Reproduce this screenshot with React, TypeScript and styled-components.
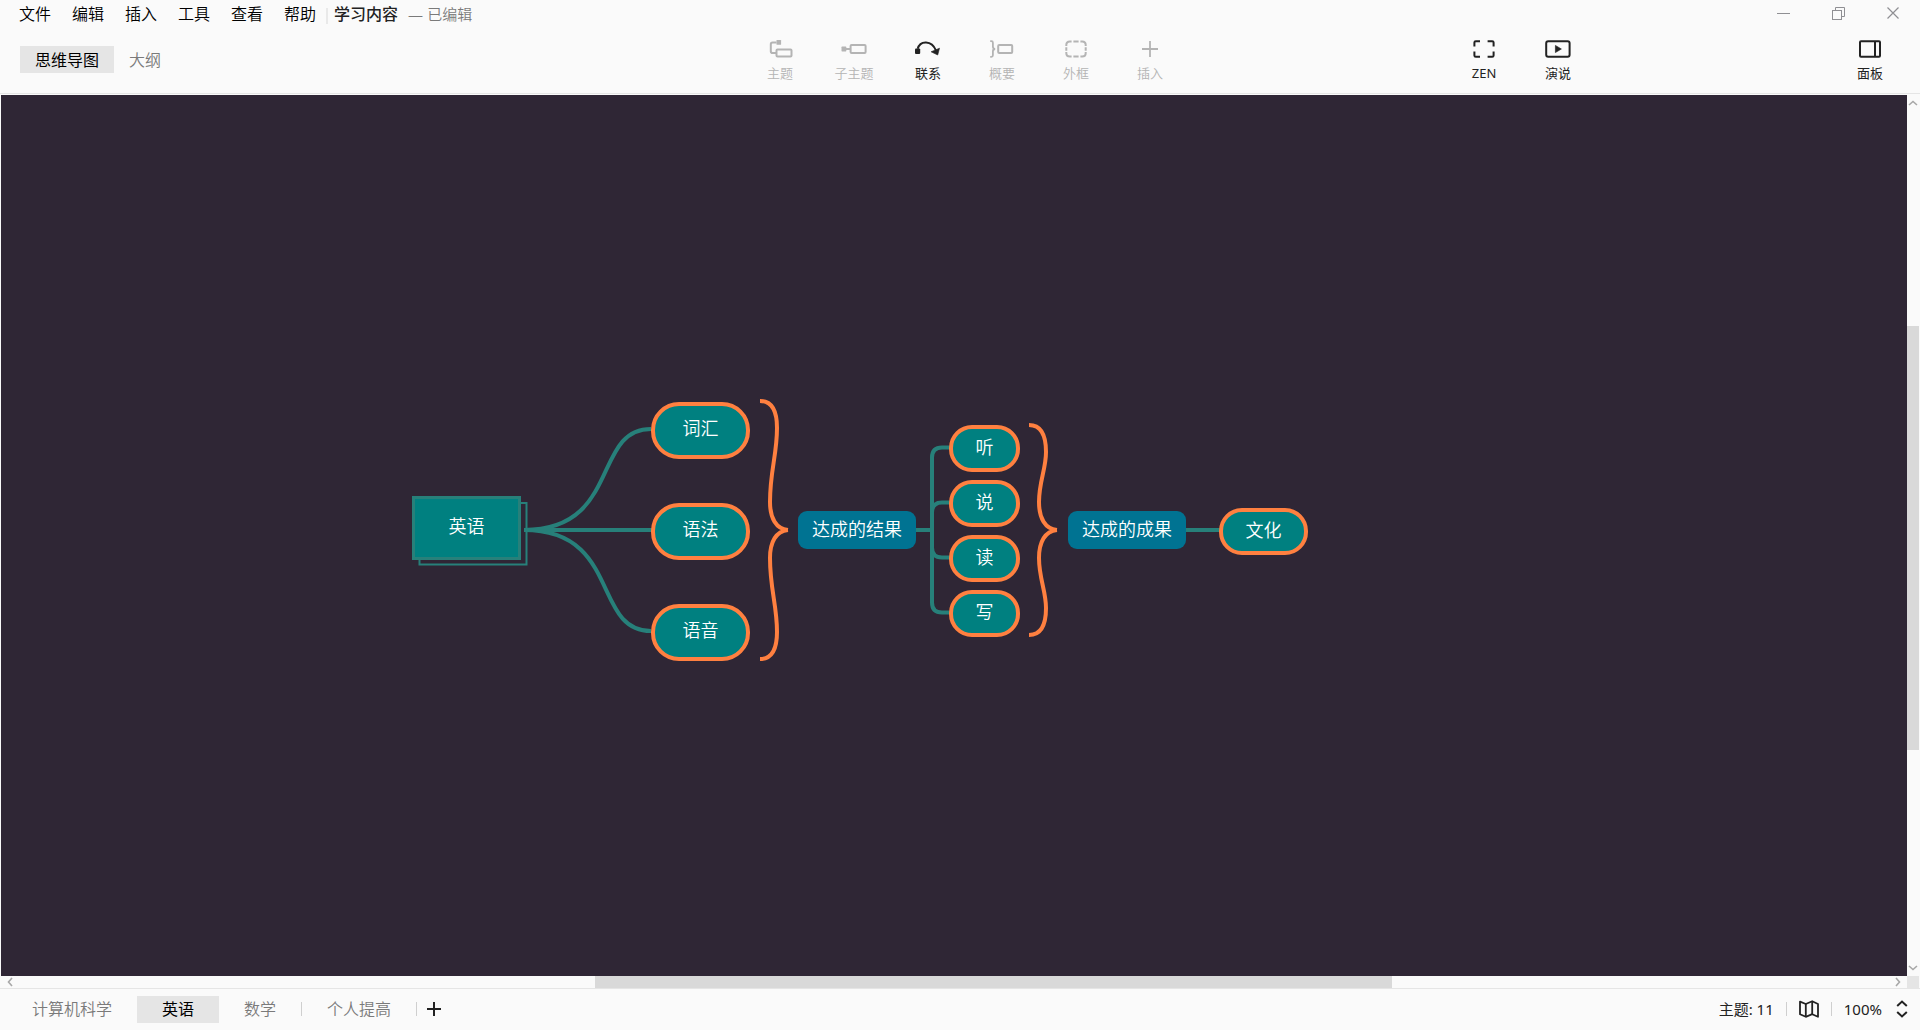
import React from "react";
import styled, { createGlobalStyle, css } from "styled-components";

const color = {
  chrome: "#fafafa",
  line: "#e5e5e5",
  thumb: "#d9d9d9",
  text: "#222",
  muted: "#7a7a7a",
  disabled: "#b4b4b4",
  canvas: "#2f2635",
  teal: "#008080",
  branch: "#27807a",
  orange: "#ff8040",
  blue: "#007392",
};

const GlobalStyle = createGlobalStyle`
  * { box-sizing: border-box; }
  html, body, #root { height: 100%; }
  body {
    margin: 0;
    overflow: hidden;
    background: ${color.chrome};
    color: ${color.text};
    font-family: "Noto Sans", "Noto Sans CJK SC", sans-serif;
  }
  button {
    border: 0;
    padding: 0;
    background: none;
    color: inherit;
    font: inherit;
    white-space: nowrap;
  }
  svg { display: block; }
`;

const Page = styled.div`
  display: flex;
  flex-direction: column;
  height: 100%;
`;

/* ---------- title and menu bar ---------- */

const MenuBar = styled.header`
  display: flex;
  align-items: center;
  height: 28px;
  padding-left: 19px;
`;

const Menus = styled.nav`
  display: flex;
  gap: 21px;
`;

const MenuButton = styled.button`
  color: #000;
  font-size: 16px;
  line-height: 24px;
  font-weight: 350;
`;

const TitleDivider = styled.span`
  width: 2px;
  height: 16px;
  margin: 4px 6px 0 10px;
  background: #e9e9e9;
`;

const DocumentTitle = styled.h1`
  margin: 0;
  font-size: 16px;
  line-height: 24px;
  font-weight: 500;
`;

const EditState = styled.span`
  display: flex;
  align-items: center;
  gap: 4px;
  margin-left: 10px;
  color: ${color.muted};
  font-size: 15px;
  line-height: 24px;
  font-weight: 350;
`;

const WindowControls = styled.div`
  display: flex;
  margin-left: auto;
  color: #8f8f93;
`;

const WindowButton = styled.button`
  display: grid;
  place-items: center;
  width: 55px;
  height: 28px;
`;

/* ---------- tool bar ---------- */

const ToolBar = styled.div`
  display: grid;
  grid-template-columns: 1fr auto 1fr;
  height: 66px;
  padding: 0 10px 0 20px;
  border-bottom: 1px solid ${color.line};
`;

const ViewTabs = styled.div`
  display: flex;
  align-items: flex-start;
  padding-top: 18px;
`;

const tabStyle = css<{ $active?: boolean }>`
  height: 27px;
  font-size: 16px;
  line-height: 26px;
  font-weight: ${(p) => (p.$active ? 400 : 350)};
  color: ${(p) => (p.$active ? "#000" : color.muted)};
  background: ${(p) => (p.$active ? color.line : "transparent")};
`;

const ViewTab = styled.button<{ $active?: boolean }>`
  && {
    ${tabStyle}
    padding: 0 15px;
  }
`;

const ToolGroup = styled.div`
  display: flex;
  gap: 10px;
`;

const RightTools = styled.div`
  display: flex;
  justify-content: space-between;
  padding: 0 8px 0 270px;
`;

const ToolButton = styled.button`
  && {
    display: flex;
    flex-direction: column;
    align-items: center;
    gap: 5px;
    width: 64px;
    padding-top: 11px;
    font-size: 13px;
    line-height: 18px;
  }

  &&:disabled {
    color: ${color.disabled};
    font-weight: 350;
  }
`;

/* ---------- workspace ---------- */

const Workspace = styled.main`
  display: grid;
  grid-template-columns: 1fr 12px;
  grid-template-rows: 1fr 12px;
  flex: 1;
  min-height: 0;
  padding: 1px 1px 0 1px;
  border-bottom: 1px solid ${color.line};
`;

const Canvas = styled.section`
  position: relative;
  overflow: hidden;
  background: ${color.canvas};
`;

const Connections = styled.svg`
  position: absolute;
  inset: 0;
  width: 100%;
  height: 100%;
  fill: none;
`;

type Kind = "root" | "pill" | "smallPill" | "summary";

const nodeKinds = {
  root: css`
    height: 64px;
    padding-bottom: 5px;
    background: ${color.teal};
    border: 3px solid ${color.branch};
  `,
  pill: css`
    height: 57px;
    padding-bottom: 5px;
    background: ${color.teal};
    border: 4px solid ${color.orange};
    border-radius: 28px;
  `,
  smallPill: css`
    height: 47px;
    padding-bottom: 4px;
    background: ${color.teal};
    border: 4px solid ${color.orange};
    border-radius: 23px;
  `,
  summary: css`
    height: 38px;
    padding-bottom: 2px;
    background: ${color.blue};
    border-radius: 9px;
  `,
};

const Node = styled.div<{ $kind: Kind; $x: number; $y: number; $w: number }>`
  position: absolute;
  left: ${(p) => p.$x}px;
  top: ${(p) => p.$y}px;
  width: ${(p) => p.$w}px;
  display: flex;
  align-items: center;
  justify-content: center;
  color: #fff;
  font-size: 18px;
  line-height: 26px;
  font-weight: 350;
  white-space: nowrap;
  ${(p) => nodeKinds[p.$kind]}
`;

/* ---------- scroll bars ---------- */

const ScrollBar = styled.div<{ $vertical?: boolean }>`
  display: grid;
  ${(p) =>
    p.$vertical
      ? "grid-template-rows: 18px 213fr 424fr 208fr 18px;"
      : "grid-template-columns: 18px 576fr 797fr 497fr 18px;"}
`;

const ScrollThumb = styled.div<{ $vertical?: boolean }>`
  ${(p) => (p.$vertical ? "grid-row: 3;" : "grid-column: 3;")}
  background: ${color.thumb};
`;

const ScrollArrow = styled.button<{ $end?: boolean; $vertical?: boolean }>`
  display: grid;
  place-items: center;
  ${(p) => (p.$vertical ? "grid-row" : "grid-column")}: ${(p) => (p.$end ? 5 : 1)};
  color: #a8a8a8;
`;

const ScrollCorner = styled.div`
  background: ${color.line};
`;

/* ---------- status bar ---------- */

const StatusBar = styled.footer`
  display: flex;
  align-items: center;
  height: 41px;
  padding: 0 12px 1px 7px;
`;

const SheetTab = styled.button<{ $active?: boolean }>`
  && {
    ${tabStyle}
    padding: 0 25px;
  }
`;

const Divider = styled.span`
  width: 1px;
  height: 14px;
  background: #cfcfcf;
`;

const AddSheet = styled.button`
  && { margin-left: 10px; }
`;

const StatusGroup = styled.div`
  display: flex;
  align-items: center;
  gap: 12px;
  margin-left: auto;
  font-size: 15px;
  line-height: 24px;
`;

const ZoomButton = styled.button`
  display: flex;
  align-items: center;
  gap: 14px;
`;

/* ---------- icons ---------- */

const Glyph = ({ children }: { children: React.ReactNode }) => (
  <svg width="28" height="20" viewBox="0 0 28 20" fill="none" stroke="currentColor" strokeWidth="2" aria-hidden="true">
    {children}
  </svg>
);

const icons = {
  topic: (
    <Glyph>
      <rect x="10.5" y="1" width="4.6" height="4.8" rx="0.6" fill="currentColor" stroke="none" />
      <path d="M10.5 3.6H6.6Q4.8 3.6 4.8 5.4V12.2Q4.8 14 6.6 14H10" />
      <rect x="10.5" y="10.4" width="15" height="7" rx="1" />
    </Glyph>
  ),
  subtopic: (
    <Glyph>
      <rect x="1.5" y="7.6" width="4.8" height="4.8" rx="0.6" fill="currentColor" stroke="none" />
      <path d="M6 10H10" />
      <rect x="10.6" y="6" width="15" height="8" rx="1" />
    </Glyph>
  ),
  relation: (
    <Glyph>
      <rect x="1" y="9.6" width="5.2" height="5.4" rx="1" fill="currentColor" stroke="none" />
      <path d="M3.7 9.8C5.9 1.3 17.7 0.8 21.9 11.4" />
      <path d="M17.1 12.8L25.5 9.2L23.7 16Z" fill="currentColor" strokeWidth="0.6" strokeLinejoin="round" />
    </Glyph>
  ),
  summary: (
    <Glyph>
      <path d="M2.2 2.2H3.4Q4.9 2.2 4.9 3.7V7.6Q4.9 10 7.2 10Q4.9 10 4.9 12.4V16.3Q4.9 17.8 3.4 17.8H2.2" strokeWidth="1.8" />
      <rect x="10.2" y="6" width="14" height="8" rx="1" />
    </Glyph>
  ),
  boundary: (
    <Glyph>
      <path d="M4.3 7V6Q4.3 2.5 7.8 2.5H9.6M18.4 2.5H20.2Q23.7 2.5 23.7 6V7M23.7 13V14Q23.7 17.5 20.2 17.5H18.4M9.6 17.5H7.8Q4.3 17.5 4.3 14V13M11.4 2.5H16.6M11.4 17.5H16.6M4.3 8.2V11.8M23.7 8.2V11.8" />
    </Glyph>
  ),
  insert: (
    <Glyph>
      <path d="M6 10H22M14 2V18" strokeWidth="1.8" />
    </Glyph>
  ),
  zen: (
    <Glyph>
      <path d="M4.4 7.4V3.6Q4.4 2.2 5.8 2.2H10M17.6 2.2H22.2Q23.6 2.2 23.6 3.6V7.4M23.6 12.4V16.4Q23.6 17.8 22.2 17.8H17.6M10 17.8H5.8Q4.4 17.8 4.4 16.4V12.4" />
    </Glyph>
  ),
  present: (
    <Glyph>
      <rect x="2.2" y="2.2" width="23.4" height="15.6" rx="2" />
      <path d="M11.4 6.4L17.4 10L11.4 13.6Z" fill="currentColor" strokeWidth="0.6" />
    </Glyph>
  ),
  panel: (
    <Glyph>
      <rect x="4" y="2.2" width="20" height="15.6" rx="1" />
      <path d="M19 2V18" />
    </Glyph>
  ),
};

const Arrow = ({ dir }: { dir: "up" | "down" | "left" | "right" }) => {
  const paths = {
    up: "M2 7L6 3.5L10 7",
    down: "M2 5L6 8.5L10 5",
    left: "M8 2L4.5 6L8 10",
    right: "M4 2L7.5 6L4 10",
  };
  return (
    <svg width="12" height="12" viewBox="0 0 12 12" fill="none" stroke="currentColor" strokeWidth="1.6" aria-hidden="true">
      <path d={paths[dir]} />
    </svg>
  );
};

/* ---------- data ---------- */

const menus = ["文件", "编辑", "插入", "工具", "查看", "帮助"];

const tools = [
  { label: "主题", icon: icons.topic, off: true },
  { label: "子主题", icon: icons.subtopic, off: true },
  { label: "联系", icon: icons.relation, off: false },
  { label: "概要", icon: icons.summary, off: true },
  { label: "外框", icon: icons.boundary, off: true },
  { label: "插入", icon: icons.insert, off: true },
];

const nodes: { text: string; kind: Kind; x: number; y: number; w: number }[] = [
  { text: "英语", kind: "root", x: 411, y: 401, w: 109 },
  { text: "词汇", kind: "pill", x: 650, y: 307, w: 99 },
  { text: "语法", kind: "pill", x: 650, y: 408, w: 99 },
  { text: "语音", kind: "pill", x: 650, y: 509, w: 99 },
  { text: "达成的结果", kind: "summary", x: 797, y: 416, w: 118 },
  { text: "听", kind: "smallPill", x: 948, y: 330, w: 71 },
  { text: "说", kind: "smallPill", x: 948, y: 385, w: 71 },
  { text: "读", kind: "smallPill", x: 948, y: 440, w: 71 },
  { text: "写", kind: "smallPill", x: 948, y: 495, w: 71 },
  { text: "达成的成果", kind: "summary", x: 1067, y: 416, w: 118 },
  { text: "文化", kind: "smallPill", x: 1218, y: 413, w: 89 },
];

/* A curly brace that opens at x and points right, centred on y = 435. */
const brace = (x: number, half: number) => {
  const side = (s: number) =>
    `M${x} ${435 + s * half}` +
    `C${x + 12} ${435 + s * half} ${x + 17} ${435 + s * (half - 10)} ${x + 17} ${435 + s * (half - 27)}` +
    `C${x + 17} ${435 + s * half * 0.58} ${x + 10} ${435 + s * half * 0.46} ${x + 10} ${435 + s * 28}` +
    `C${x + 10} ${435 + s * 12} ${x + 16} ${435 + s} ${x + 28} 435`;
  return side(-1) + side(1);
};

export default function App() {
  return (
    <Page>
      <GlobalStyle />
      <MenuBar>
        <Menus aria-label="菜单">
          {menus.map((m) => (
            <MenuButton key={m}>{m}</MenuButton>
          ))}
        </Menus>
        <TitleDivider />
        <DocumentTitle>学习内容</DocumentTitle>
        <EditState>
          <span>—</span>
          <span>已编辑</span>
        </EditState>
        <WindowControls>
          <WindowButton aria-label="最小化">
            <svg width="14" height="14" viewBox="0 0 14 14" stroke="currentColor">
              <path d="M1 6.5H14" />
            </svg>
          </WindowButton>
          <WindowButton aria-label="还原">
            <svg width="14" height="14" viewBox="0 0 14 14" stroke="currentColor" fill="none">
              <rect x="1.5" y="3.5" width="9" height="9" />
              <path d="M4.5 3.5V0.5H13.5V9.5H10.5" />
            </svg>
          </WindowButton>
          <WindowButton aria-label="关闭">
            <svg width="14" height="14" viewBox="0 0 14 14" stroke="currentColor" strokeWidth="1.2">
              <path d="M1.5 0.5L12.5 11.5M12.5 0.5L1.5 11.5" />
            </svg>
          </WindowButton>
        </WindowControls>
      </MenuBar>

      <ToolBar>
        <ViewTabs>
          <ViewTab $active>思维导图</ViewTab>
          <ViewTab>大纲</ViewTab>
        </ViewTabs>
        <ToolGroup>
          {tools.map((t) => (
            <ToolButton key={t.label} disabled={t.off}>
              {t.icon}
              {t.label}
            </ToolButton>
          ))}
        </ToolGroup>
        <RightTools>
          <ToolGroup>
            <ToolButton>
              {icons.zen}
              ZEN
            </ToolButton>
            <ToolButton>
              {icons.present}
              演说
            </ToolButton>
          </ToolGroup>
          <ToolButton>
            {icons.panel}
            面板
          </ToolButton>
        </RightTools>
      </ToolBar>

      <Workspace>
        <Canvas>
          <Connections>
            <rect x="418.5" y="408" width="107" height="61.5" stroke={color.branch} strokeWidth="2" />
            <g stroke={color.branch} strokeWidth="4">
              <path d="M523 435C620 435 591 334 650 334" />
              <path d="M523 435H652" />
              <path d="M523 435C620 435 591 536 650 536" />
              <path d="M915 435H931" />
              <path d="M950 352.5H941Q931 352.5 931 362.5V507.5Q931 517.5 941 517.5H950" />
              <path d="M950 407.5H941Q931 407.5 931 417.5M950 462.5H941Q931 462.5 931 452.5" />
              <path d="M1185 435H1219" />
            </g>
            <g stroke={color.orange} strokeWidth="4">
              <path d={brace(759, 129)} />
              <path d={brace(1028, 105)} />
            </g>
          </Connections>
          {nodes.map((n) => (
            <Node key={n.text} $kind={n.kind} $x={n.x} $y={n.y} $w={n.w}>
              {n.text}
            </Node>
          ))}
        </Canvas>
        <ScrollBar $vertical>
          <ScrollArrow $vertical aria-label="向上滚动">
            <Arrow dir="up" />
          </ScrollArrow>
          <ScrollThumb $vertical />
          <ScrollArrow $vertical $end aria-label="向下滚动">
            <Arrow dir="down" />
          </ScrollArrow>
        </ScrollBar>
        <ScrollBar>
          <ScrollArrow aria-label="向左滚动">
            <Arrow dir="left" />
          </ScrollArrow>
          <ScrollThumb />
          <ScrollArrow $end aria-label="向右滚动">
            <Arrow dir="right" />
          </ScrollArrow>
        </ScrollBar>
        <ScrollCorner />
      </Workspace>

      <StatusBar>
        <SheetTab>计算机科学</SheetTab>
        <SheetTab $active>英语</SheetTab>
        <SheetTab>数学</SheetTab>
        <Divider />
        <SheetTab>个人提高</SheetTab>
        <Divider />
        <AddSheet aria-label="添加画布">
          <svg width="14" height="14" viewBox="0 0 14 14" stroke="currentColor" strokeWidth="2">
            <path d="M0 7H14M7 0V14" />
          </svg>
        </AddSheet>
        <StatusGroup>
          <span>主题: 11</span>
          <Divider />
          <button aria-label="导航图">
            <svg width="20" height="18" viewBox="0 0 20 18" fill="none" stroke="currentColor" strokeWidth="1.8" strokeLinejoin="round">
              <path d="M1 1.6L6.8 4L13.2 1.2L19 4V16.8L13.2 14.2L6.8 16.8L1 14.2Z" />
              <path d="M6.8 4V16.8M13.2 1.2V14.2" />
            </svg>
          </button>
          <Divider />
          <ZoomButton aria-label="缩放比例">
            100%
            <svg width="12" height="18" viewBox="0 0 12 18" fill="none" stroke="currentColor" strokeWidth="2">
              <path d="M1.2 6L6 1.5L10.8 6M1.2 12L6 16.5L10.8 12" />
            </svg>
          </ZoomButton>
        </StatusGroup>
      </StatusBar>
    </Page>
  );
}
